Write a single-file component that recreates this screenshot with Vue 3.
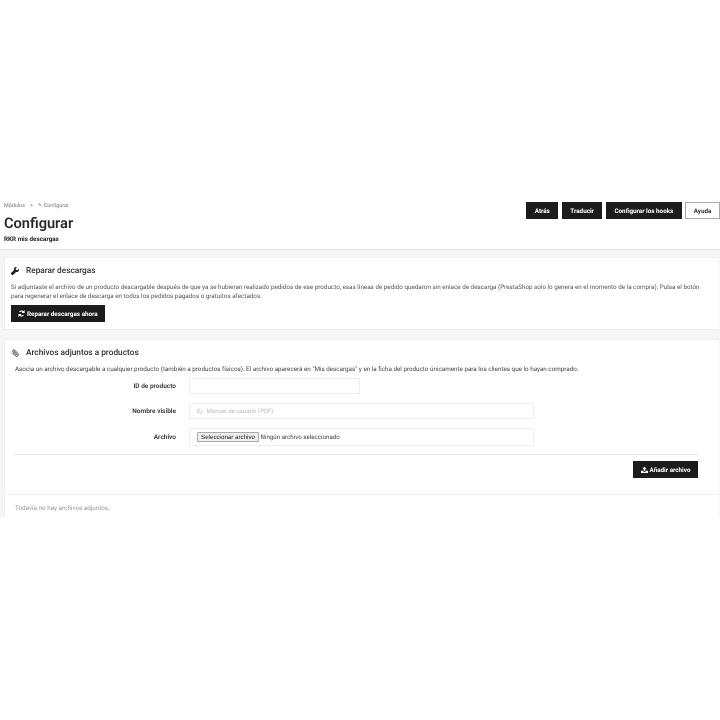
<script setup>
const buttons = [
  { label: 'Atrás' },
  { label: 'Traducir' },
  { label: 'Configurar los hooks' },
  { label: 'Ayuda', light: true },
]
</script>

<template>
  <div class="page">
    <header class="head">
      <div class="head-left">
        <div class="crumbs"><span>Módulos</span><span class="sep">&gt;</span><span>✎ Configurar</span></div>
        <h1>Configurar</h1>
        <div class="sub">RKR mis descargas</div>
      </div>
      <div class="actions">
        <button v-for="b in buttons" :key="b.label" class="btn" :class="{ light: b.light }">{{ b.label }}</button>
      </div>
    </header>
    <main class="content">
      <section class="panel repair">
        <h2>
          <svg class="ico" viewBox="0 0 16 16"><path fill="#222" d="M15.500 3.400l-3 3-2.600-.7-.7-2.600 3-3a4.600 4.600 0 0 0-6 5.800L.7 11.400a2.200 2.200 0 0 0 0 3.100l.8.800a2.200 2.200 0 0 0 3.100 0l5.500-5.500a4.600 4.600 0 0 0 5.400-6.400z"/></svg>
          Reparar descargas
        </h2>
        <p class="text">Si adjuntaste el archivo de un producto descargable después de que ya se hubieran realizado pedidos de ese producto, esas líneas de pedido quedaron sin enlace de descarga (PrestaShop solo lo genera en el momento de la compra). Pulsa el botón para regenerar el enlace de descarga en todos los pedidos pagados o gratuitos afectados.</p>
        <button class="btn repair-btn">
          <svg class="btn-ico" viewBox="0 0 16 16"><path fill="none" stroke="#fff" stroke-width="2.600" d="M13.500 6.800A5.700 5.700 0 0 0 3.500 4.500M2.500 9.200a5.700 5.700 0 0 0 10 2.300"/><path fill="#fff" d="M15 0v7H8zM1 16V9h7z"/></svg>
          Reparar descargas ahora
        </button>
      </section>
      <section class="panel files">
        <h2>
          <svg class="ico" viewBox="0 0 16 16"><path transform="rotate(-45 8 8)" fill="none" stroke="#333" stroke-width="1.700" stroke-linecap="round" d="M4.500 4.500v8a3.500 3.500 0 0 0 7 0V3.500a2.300 2.300 0 0 0-4.600 0v8a1.100 1.100 0 0 0 2.200 0V4.500"/></svg>
          Archivos adjuntos a productos
        </h2>
        <p class="text intro">Asocia un archivo descargable a cualquier producto (también a productos físicos). El archivo aparecerá en "Mis descargas" y en la ficha del producto únicamente para los clientes que lo hayan comprado.</p>
        <div class="rows">
          <div class="row"><label>ID de producto</label><div class="field short"></div></div>
          <div class="row"><label>Nombre visible</label><div class="field ph">Ej.: Manual de usuario (PDF)</div></div>
          <div class="row tall"><label>Archivo</label><div class="field file"><span class="choose">Seleccionar archivo</span><span>Ningún archivo seleccionado</span></div></div>
        </div>
        <div class="foot">
          <button class="btn add">
            <svg class="btn-ico" viewBox="0 0 16 16"><path fill="#fff" d="M8 1l4.500 5H10v5H6V6H3.500zM0 11h4.500a3.500 2.500 0 0 0 7 0H16v5H0z"/></svg>
            Añadir archivo
          </button>
        </div>
        <div class="empty">Todavía no hay archivos adjuntos.</div>
      </section>
    </main>
  </div>
</template>

<style>
html, body { margin: 0; background: #fff; }
</style>

<style scoped>
.page {
  padding-top: 196px;
  font-family: Roboto, "Noto Sans", sans-serif;
  color: #363a41;
  font-size: 6.400px;
  text-rendering: geometricPrecision;
  filter: blur(0.25px);
}
.head {
  display: flex;
  justify-content: space-between;
  align-items: flex-start;
  height: 53px;
  padding: 0 0 0 4px;
  border-bottom: 1px solid #e6e6e6;
}
.crumbs { display: flex; gap: 5px; color: #777; font-size: 5.400px; line-height: 7px; margin-top: 7px; }
.sep { color: #555; }
h1 { margin: 4px 0 0; font-size: 14.600px; line-height: 19px; font-weight: 600; color: #25282c; }
.sub { margin-top: 2px; font-size: 6.300px; line-height: 9px; font-weight: 700; color: #222; }
.actions { display: flex; gap: 3.500px; margin-top: 6px; }
.btn {
  display: inline-flex;
  align-items: center;
  justify-content: center;
  height: 17px;
  padding: 0 7.500px;
  background: #1c1c1c;
  color: #fff;
  border: 1px solid #1c1c1c;
  white-space: nowrap;
  text-rendering: geometricPrecision;
  font: 700 6.300px Roboto, sans-serif;
}
.btn.light { background: #fff; color: #333; border-color: #aaa; }
.content {
  background: #f6f6f6;
  padding: 7px 0 0 4px;
  box-sizing: border-box;
  height: 267px;
  display: flex;
  flex-direction: column;
  gap: 9px;
}
.panel { background: #fff; border: 1px solid #eee; border-right: 0; }
.repair { height: 73px; padding: 8px 6px; box-sizing: border-box; margin-right: 1px; }
.files { flex: 1; padding: 0; display: flex; flex-direction: column; margin-right: 1px; }
h2 {
  display: flex;
  align-items: center;
  gap: 7px;
  margin: 0;
  font-size: 8.300px;
  line-height: 10px;
  font-weight: 500;
  color: #2c2f33;
}
.ico { width: 8px; height: 8px; flex: none; }
.files h2 { margin: 8px 0 0 6px; }
.text { margin: 7px 0 0; font-size: 6.290px; line-height: 9px; color: #555; }
.repair-btn { height: 17px; margin-top: 4px; padding: 0 6px; gap: 2px; }
.btn-ico { width: 7px; height: 7px; }
.intro { margin: 7px 0 0 10px; color: #444; }
.rows { display: flex; flex-direction: column; gap: 9px; margin-top: 4px; }
.row { display: flex; align-items: center; height: 16px; }
.row.tall { height: 18px; }
.row label { width: 171px; text-align: right; font-weight: 600; font-size: 6.500px; color: #333; flex: none; }
.field {
  margin-left: 13px;
  width: 345px;
  height: 100%;
  box-sizing: border-box;
  border: 1px solid #eee;
  display: flex;
  align-items: center;
  padding-left: 7px;
}
.short { width: 171px; }
.ph { color: #bbb; font-size: 6.100px; }
.file { padding-left: 7px; gap: 1.500px; color: #444; font-size: 6.200px; }
.choose {
  font: 6.200px "Liberation Sans", sans-serif;
  background: #efefef;
  border: 1px solid #aaa;
  border-radius: 1px;
  padding: 0.500px 3px;
  color: #222;
}
.foot {
  margin: 8px 21px 0 9px;
  border-top: 1px solid #e6e6e6;
  padding-top: 6px;
  display: flex;
  justify-content: flex-end;
  height: 33px;
}
.add { padding: 0 6px; gap: 2px; height: 17px; width: 65px; }
.empty {
  border-top: 1px solid #f0f0f0;
  padding: 9px 10px;
  color: #999;
  font-size: 6.300px;
}
</style>
